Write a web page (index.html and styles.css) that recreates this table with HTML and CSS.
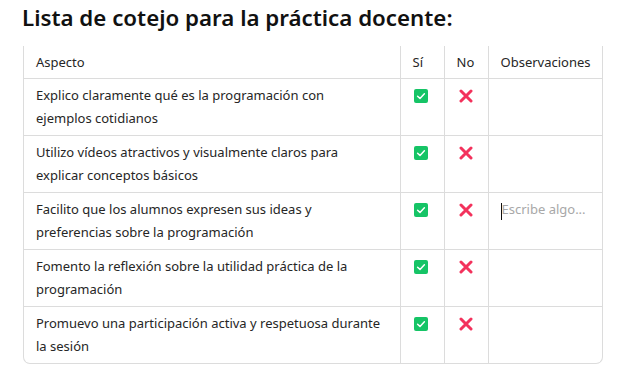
FILE: index.html
```html
<!DOCTYPE html>
<html lang="es">
<head>
<meta charset="utf-8">
<link rel="stylesheet" href="styles.css">
</head>
<body>
<h2 class="title">Lista de cotejo para la práctica docente:</h2>
<div class="wrap">
<table class="grid">
<colgroup><col class="c-asp"><col class="c-si"><col class="c-no"><col class="c-obs"></colgroup>
<thead>
<tr><th>Aspecto</th><th>Sí</th><th>No</th><th>Observaciones</th></tr>
</thead>
<tbody>
<tr><td>Explico claramente qué es la programación con ejemplos cotidianos</td><td class="ic"><span class="yes"><svg viewBox="0 0 14 14" width="14" height="14"><rect width="14" height="14" rx="2" fill="#16c466"/><path d="M3.6 7.2 L6 9.4 L10.4 4.8" fill="none" stroke="#fff" stroke-width="1.5" stroke-linecap="round" stroke-linejoin="round"/></svg></span></td><td class="ic"><span class="no"><svg viewBox="0 0 14 14" width="14" height="14"><path d="M2 2 L12 12 M12 2 L2 12" stroke="#f3325c" stroke-width="3" stroke-linecap="round"/></svg></span></td><td></td></tr>
<tr><td>Utilizo vídeos atractivos y visualmente claros para explicar conceptos básicos</td><td class="ic"><span class="yes"><svg viewBox="0 0 14 14" width="14" height="14"><rect width="14" height="14" rx="2" fill="#16c466"/><path d="M3.6 7.2 L6 9.4 L10.4 4.8" fill="none" stroke="#fff" stroke-width="1.5" stroke-linecap="round" stroke-linejoin="round"/></svg></span></td><td class="ic"><span class="no"><svg viewBox="0 0 14 14" width="14" height="14"><path d="M2 2 L12 12 M12 2 L2 12" stroke="#f3325c" stroke-width="3" stroke-linecap="round"/></svg></span></td><td></td></tr>
<tr><td>Facilito que los alumnos expresen sus ideas y preferencias sobre la programación</td><td class="ic"><span class="yes"><svg viewBox="0 0 14 14" width="14" height="14"><rect width="14" height="14" rx="2" fill="#16c466"/><path d="M3.6 7.2 L6 9.4 L10.4 4.8" fill="none" stroke="#fff" stroke-width="1.5" stroke-linecap="round" stroke-linejoin="round"/></svg></span></td><td class="ic"><span class="no"><svg viewBox="0 0 14 14" width="14" height="14"><path d="M2 2 L12 12 M12 2 L2 12" stroke="#f3325c" stroke-width="3" stroke-linecap="round"/></svg></span></td><td><span class="ph"><span class="caret"></span>Escribe algo...</span></td></tr>
<tr><td>Fomento la reflexión sobre la utilidad práctica de la programación</td><td class="ic"><span class="yes"><svg viewBox="0 0 14 14" width="14" height="14"><rect width="14" height="14" rx="2" fill="#16c466"/><path d="M3.6 7.2 L6 9.4 L10.4 4.8" fill="none" stroke="#fff" stroke-width="1.5" stroke-linecap="round" stroke-linejoin="round"/></svg></span></td><td class="ic"><span class="no"><svg viewBox="0 0 14 14" width="14" height="14"><path d="M2 2 L12 12 M12 2 L2 12" stroke="#f3325c" stroke-width="3" stroke-linecap="round"/></svg></span></td><td></td></tr>
<tr><td>Promuevo una participación activa y respetuosa durante la sesión</td><td class="ic"><span class="yes"><svg viewBox="0 0 14 14" width="14" height="14"><rect width="14" height="14" rx="2" fill="#16c466"/><path d="M3.6 7.2 L6 9.4 L10.4 4.8" fill="none" stroke="#fff" stroke-width="1.5" stroke-linecap="round" stroke-linejoin="round"/></svg></span></td><td class="ic"><span class="no"><svg viewBox="0 0 14 14" width="14" height="14"><path d="M2 2 L12 12 M12 2 L2 12" stroke="#f3325c" stroke-width="3" stroke-linecap="round"/></svg></span></td><td></td></tr>
</tbody>
</table>
</div>
</body>
</html>
```
FILE: styles.css
```css
html, body {
  margin: 0;
  padding: 0;
  background: #ffffff;
}
body {
  font-family: "Noto Sans", "Open Sans", sans-serif;
  color: #1f1f1f;
}
.title {
  margin: 0;
  padding: 4px 0 0 22px;
  height: 42px;
  box-sizing: border-box;
  font-size: 22.3px;
  font-weight: 600;
  line-height: 28px;
  color: #111111;
}
.wrap {
  margin: 4px 0 0 23px;
  width: 580px;
  box-sizing: border-box;
  border: 1px solid #dcdcdc;
  border-top: none;
  border-radius: 0 0 7px 7px;
  overflow: hidden;
}
.grid {
  width: 100%;
  border-collapse: collapse;
  table-layout: fixed;
  font-size: 13px;
  line-height: 23px;
}
.c-asp { width: 376px; }
.c-si { width: 44px; }
.c-no { width: 44px; }
.c-obs { width: auto; }
.grid th, .grid td {
  text-align: left;
  font-weight: 400;
  vertical-align: top;
  padding: 5px 12px;
  border-right: 1px solid #dcdcdc;
  border-bottom: 1px solid #dcdcdc;
  color: #262626;
}
.grid td:first-child { padding-right: 18px; }
.grid th {
  padding: 5px 12px 4px;
}
.grid th:last-child, .grid td:last-child { border-right: none; }
.grid tbody tr:last-child td { border-bottom: none; }
.grid td.ic {
  padding: 0;
}
.yes, .no {
  display: block;
  height: 14px;
  margin-top: 10px;
}
.yes { margin-left: 13px; }
.no { margin-left: 14px; }
.yes svg, .no svg { display: block; }
.ph {
  position: relative;
  color: #a8a8a8;
  padding-left: 1px;
}
.caret {
  position: absolute;
  left: 0;
  top: 3px;
  width: 1px;
  height: 17px;
  background: #111;
}
```
